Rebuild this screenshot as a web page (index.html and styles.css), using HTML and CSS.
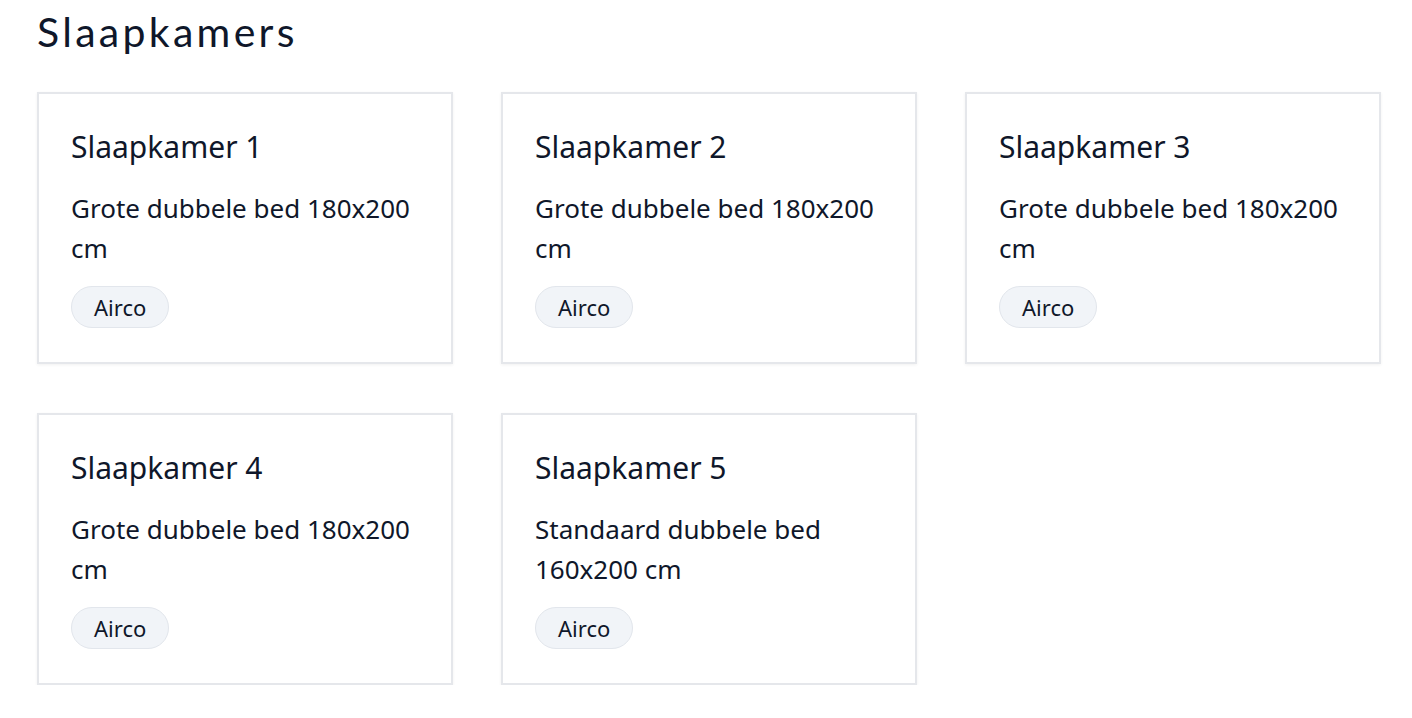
FILE: index.html
```html
<!DOCTYPE html>
<html lang="en">
<head>
    <meta charset="UTF-8">
    <meta name="viewport" content="width=device-width, initial-scale=1.0">
    <title>Slaapkamers</title>
    <link rel="stylesheet" href="styles.css">
</head>
<body>
    <section class="rooms">
        <h2 class="rooms-title">Slaapkamers</h2>

        <div class="room-grid">
            <div class="room-card">
                <h3>Slaapkamer 1</h3>
                <p>Grote dubbele bed 180x200 cm</p>
                <span class="tag">Airco</span>
            </div>
            <div class="room-card">
                <h3>Slaapkamer 2</h3>
                <p>Grote dubbele bed 180x200 cm</p>
                <span class="tag">Airco</span>
            </div>
            <div class="room-card">
                <h3>Slaapkamer 3</h3>
                <p>Grote dubbele bed 180x200 cm</p>
                <span class="tag">Airco</span>
            </div>
            <div class="room-card">
                <h3>Slaapkamer 4</h3>
                <p>Grote dubbele bed 180x200 cm</p>
                <span class="tag">Airco</span>
            </div>
            <div class="room-card">
                <h3>Slaapkamer 5</h3>
                <p>Standaard dubbele bed 160x200 cm</p>
                <span class="tag">Airco</span>
            </div>
        </div>
    </section>
</body>
</html>
```

FILE: styles.css
```css
/* General styles */
body {
    margin: 0;
    padding: 0 31px 0 37px;
    background: #ffffff;
    color: #0f172a;
    font-family: "Noto Sans", Arial, sans-serif;
}

.rooms-title {
    font-family: "Lato", "Noto Sans", sans-serif;
    font-weight: 400;
    font-size: 41px;
    letter-spacing: 3.3px;
    line-height: 1.2;
    margin: 7px 0 36px;
}

/* Card grid */
.room-grid {
    display: grid;
    grid-template-columns: repeat(3, 416px);
    gap: 49px 48px;
}

.room-card {
    border: 2px solid #e5e7eb;
    box-shadow: 0 1px 3px rgba(0, 0, 0, 0.06);
    padding: 33px 32px 34px;
}

.room-card h3 {
    font-size: 30px;
    font-weight: 400;
    line-height: 40px;
    margin: 0 0 21px;
}

.room-card p {
    font-size: 26px;
    line-height: 40px;
    margin: 0 0 18px;
}

.tag {
    display: inline-block;
    box-sizing: border-box;
    padding: 0 22px;
    height: 42px;
    line-height: 40px;
    font-size: 22px;
    background: #f1f4f8;
    border: 1px solid #e2e6ec;
    border-radius: 21px;
}
```
